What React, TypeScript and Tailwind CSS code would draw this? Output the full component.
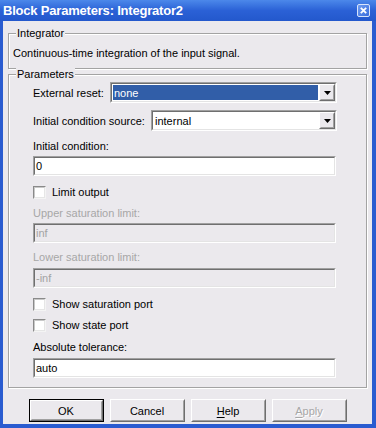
import type { ReactNode } from 'react'

const font = "font-['Liberation_Sans',Arial,sans-serif]"

function Field({ value, disabled }: { value: string; disabled?: boolean }) {
  return (
    <div className="h-[20px] w-[303px] border border-t-[#a0a0a0] border-l-[#a0a0a0] border-b-white border-r-white">
      <div
        className={`h-full border border-t-[#6f6f6f] border-l-[#6f6f6f] border-b-[#e4e4e4] border-r-[#e4e4e4] flex items-center px-[1px] text-[11px] leading-[14px] ${
          disabled ? 'bg-[#ebe9ed] text-[#a3a3a3]' : 'bg-white text-black'
        }`}
      >
        {value}
      </div>
    </div>
  )
}

function ArrowButton() {
  return (
    <div className="w-[16px] h-full border border-t-white border-l-white border-b-[#6e6e6e] border-r-[#6e6e6e] bg-[#ebe9ed]">
      <div className="h-full border border-t-[#ebe9ed] border-l-[#ebe9ed] border-b-[#a0a0a0] border-r-[#a0a0a0] flex items-center justify-center">
        <svg width="7" height="4" viewBox="0 0 7 4">
          <path d="M0 0h7L3.5 4z" fill="#000" />
        </svg>
      </div>
    </div>
  )
}

function Combo({ value, width, selected }: { value: string; width: string; selected?: boolean }) {
  return (
    <div className={`h-[21px] ${width} border border-t-[#a0a0a0] border-l-[#a0a0a0] border-b-white border-r-white`}>
      <div className="h-full border border-t-[#6f6f6f] border-l-[#6f6f6f] border-b-[#e4e4e4] border-r-[#e4e4e4] bg-white flex">
        <div className="flex-1 p-[1px] flex">
          <div
            className={`flex-1 flex items-center px-[1px] text-[11px] leading-[14px] ${
              selected ? 'bg-[#315ea8] text-white' : 'text-black'
            }`}
          >
            {value}
          </div>
        </div>
        <ArrowButton />
      </div>
    </div>
  )
}

function Check({ label }: { label: string }) {
  return (
    <div className="h-[14px] flex items-center gap-[6px]">
      <div className="w-[13px] h-[13px] border border-t-[#8a8a8a] border-l-[#8a8a8a] border-b-[#f4f4f4] border-r-[#f4f4f4]">
        <div className="h-full border border-t-[#c8c8c8] border-l-[#c8c8c8] border-b-[#e6e6e6] border-r-[#e6e6e6] bg-white" />
      </div>
      <span className="text-[11px] leading-[14px] text-black">{label}</span>
    </div>
  )
}

function Label({ children, disabled }: { children: ReactNode; disabled?: boolean }) {
  return (
    <div className={`h-[14px] text-[11px] leading-[14px] ${disabled ? 'text-[#a7a7a7]' : 'text-black'}`}>
      {children}
    </div>
  )
}

function Group({ title, className, children }: { title: string; className: string; children: ReactNode }) {
  return (
    <div
      className={`relative border border-[#a3a3a3] shadow-[inset_1px_1px_0_#fff,1px_1px_0_#fff] ${className}`}
    >
      <span className="absolute left-[7px] -top-[7px] px-[1px] bg-[#ebe9ed] text-[11px] leading-[13px] text-black">
        {title}
      </span>
      {children}
    </div>
  )
}

function Button({ children, primary, disabled }: { children: ReactNode; primary?: boolean; disabled?: boolean }) {
  const inner = (
    <div className="h-full border border-t-white border-l-white border-b-[#6e6e6e] border-r-[#6e6e6e]">
      <div
        className={`h-full border border-t-[#ebe9ed] border-l-[#ebe9ed] border-b-[#a0a0a0] border-r-[#a0a0a0] flex items-center justify-center text-[11px] leading-[14px] ${
          disabled ? 'text-[#a7a7a7] [text-shadow:1px_1px_0_#fff]' : 'text-black'
        }`}
      >
        {children}
      </div>
    </div>
  )
  return (
    <div className={`w-[75px] h-[23px] bg-[#ebe9ed] ${primary ? 'border border-black' : ''}`}>{inner}</div>
  )
}

export default function App() {
  return (
    <div className={`w-[376px] h-[428px] bg-[#2a5cd0] flex flex-col ${font}`}>
      {/* Title bar */}
      <div className="h-[21px] shrink-0 bg-gradient-to-b from-[#4c88ea] via-[#2b61d6] to-[#2358cc] flex items-center pl-[3px] pr-[6px]">
        <span className="flex-1 text-[13px] font-bold text-white leading-[16px] tracking-[-0.2px]">
          Block Parameters: Integrator2
        </span>
        <div className="w-[13px] h-[13px] rounded-[2px] border border-[#d8e4fb] bg-gradient-to-br from-[#6f9cf0] to-[#3a6ddc] flex items-center justify-center">
          <svg width="7" height="7" viewBox="0 0 7 7">
            <path d="M0.8 0.8L6.2 6.2M6.2 0.8L0.8 6.2" stroke="#fff" strokeWidth="1.8" />
          </svg>
        </div>
      </div>

      {/* Body */}
      <div className="flex-1 ml-[3px] mr-[4px] mb-[4px] bg-[#ebe9ed] flex flex-col px-[5px] pt-[12px]">
        <Group title="Integrator" className="pt-[12px] pb-[8px] pl-[4px]">
          <div className="text-[11px] leading-[14px] text-black">Continuous-time integration of the input signal.</div>
        </Group>

        <Group title="Parameters" className="mt-[5px] pl-[24px] pr-[29px] pt-[7px] pb-[9px] flex flex-col">
          <div className="flex items-center justify-between">
            <Label>External reset:</Label>
            <Combo value="none" width="w-[227px]" selected />
          </div>
          <div className="mt-[7px] flex items-center justify-between">
            <Label>Initial condition source:</Label>
            <Combo value="internal" width="w-[186px]" />
          </div>
          <div className="mt-[8px]">
            <Label>Initial condition:</Label>
          </div>
          <div className="mt-[3px]">
            <Field value="0" />
          </div>
          <div className="mt-[9px]">
            <Check label="Limit output" />
          </div>
          <div className="mt-[7px]">
            <Label disabled>Upper saturation limit:</Label>
          </div>
          <div className="mt-[3px]">
            <Field value="inf" disabled />
          </div>
          <div className="mt-[7px]">
            <Label disabled>Lower saturation limit:</Label>
          </div>
          <div className="mt-[4px]">
            <Field value="-inf" disabled />
          </div>
          <div className="mt-[9px]">
            <Check label="Show saturation port" />
          </div>
          <div className="mt-[7px]">
            <Check label="Show state port" />
          </div>
          <div className="mt-[8px]">
            <Label>Absolute tolerance:</Label>
          </div>
          <div className="mt-[4px]">
            <Field value="auto" />
          </div>
        </Group>

        <div className="mt-[11px] flex justify-center gap-[6px]">
          <Button primary>OK</Button>
          <Button>Cancel</Button>
          <Button>
            <span className="underline underline-offset-2">H</span>elp
          </Button>
          <Button disabled>
            <span className="underline underline-offset-2">A</span>pply
          </Button>
        </div>
      </div>
    </div>
  )
}
